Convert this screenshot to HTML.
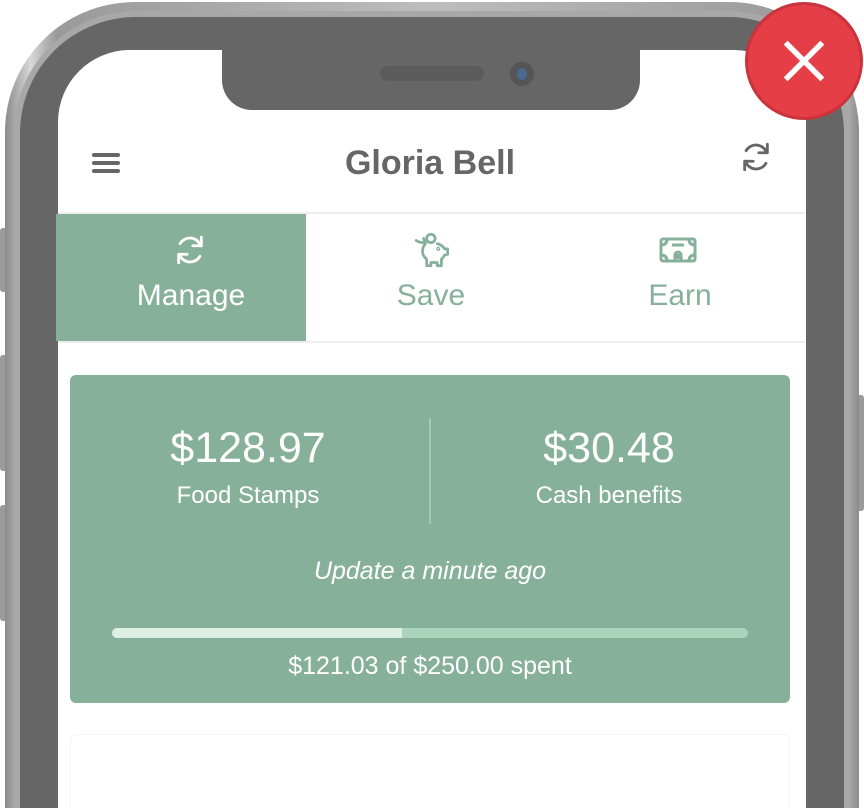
<!DOCTYPE html>
<html><head><meta charset="utf-8"><style>
*{margin:0;padding:0;box-sizing:border-box}
html{width:864px;height:808px;overflow:hidden}
body{width:864px;height:808px;overflow:hidden;background:#fff;position:relative;font-family:"Liberation Sans",sans-serif}
.abs{position:absolute}
.clip{position:absolute;left:0;top:0;width:864px;height:808px;overflow:hidden}
</style></head><body><div class="clip">
<div class="abs" style="left:0;top:228px;width:10px;height:64px;background:#9a9a9a;border-radius:3px"></div>
<div class="abs" style="left:0;top:355px;width:10px;height:116px;background:#9a9a9a;border-radius:3px"></div>
<div class="abs" style="left:0;top:505px;width:10px;height:116px;background:#9a9a9a;border-radius:3px"></div>
<div class="abs" style="left:854px;top:395px;width:10px;height:116px;background:#9a9a9a;border-radius:3px"></div>
<div class="abs" style="left:5px;top:2px;width:854px;height:806px;border-radius:130px 130px 0 0;background:linear-gradient(90deg,#8a8a8a,#d8d8d8 3%,#9a9a9a 6%,#bdbdbd 50%,#9a9a9a 94%,#d8d8d8 97%,#8a8a8a)"></div>
<div class="abs" style="left:14px;top:11px;width:836px;height:797px;border-radius:122px 122px 0 0;background:#a8a8a8"></div>
<div class="abs" style="left:20px;top:17px;width:824px;height:791px;border-radius:116px 116px 0 0;background:#666"></div>
<div class="abs" style="left:58px;top:50px;width:748px;height:758px;border-radius:72px 72px 0 0;background:#fff"></div>
<div class="abs" style="left:222px;top:40px;width:418px;height:70px;background:#666;border-radius:0 0 30px 30px"></div>
<div class="abs" style="left:380px;top:66px;width:104px;height:15px;background:#5c5c5c;border-radius:8px"></div>
<div class="abs" style="left:510px;top:62px;width:24px;height:24px;background:#555;border-radius:50%"></div>
<div class="abs" style="left:517px;top:68px;width:10px;height:12px;background:#4a6a90;border-radius:50%"></div>
<div class="abs" style="left:92px;top:153px;width:28px;height:4px;background:#666;border-radius:2px"></div>
<div class="abs" style="left:92px;top:161px;width:28px;height:4px;background:#666;border-radius:2px"></div>
<div class="abs" style="left:92px;top:169px;width:28px;height:4px;background:#666;border-radius:2px"></div>
<div class="abs" style="left:230px;top:144px;width:400px;text-align:center;font-size:34px;font-weight:bold;color:#666">Gloria Bell</div>
<svg class="abs" style="left:738px;top:140px" width="36" height="34" viewBox="0 0 24 24" fill="none" stroke="#666" stroke-width="2" stroke-linecap="round" stroke-linejoin="round"><path d="M20 3v6h-6"/><path d="M4 21v-6h6"/><path d="M19.5 9A8 8 0 0 0 5 7.5"/><path d="M4.5 15a8 8 0 0 0 14.5 1.5"/></svg>
<div class="abs" style="left:58px;top:212px;width:748px;height:2px;background:#eee"></div>
<div class="abs" style="left:58px;top:341px;width:748px;height:2px;background:#eee"></div>
<div class="abs" style="left:56px;top:214px;width:250px;height:127px;background:#86b09a"></div>
<svg class="abs" style="left:172px;top:233px" width="36" height="34" viewBox="0 0 24 24" fill="none" stroke="#fff" stroke-width="2" stroke-linecap="round" stroke-linejoin="round"><path d="M20 3v6h-6"/><path d="M4 21v-6h6"/><path d="M19.5 9A8 8 0 0 0 5 7.5"/><path d="M4.5 15a8 8 0 0 0 14.5 1.5"/></svg>
<div class="abs" style="left:66px;top:279px;width:250px;text-align:center;font-size:30px;color:#fff">Manage</div>
<svg class="abs" style="left:412px;top:230px" width="42" height="42" viewBox="0 0 40 40" fill="none" stroke="#86b09a" stroke-width="2.6" stroke-linecap="round" stroke-linejoin="round"><circle cx="18" cy="8" r="4"/><path d="M4 10c3 2 5 2 8 2"/><path d="M24 13c4 1 6 3 7 5l3 0 0 5-3 1c-1 2-2 3-3 4v6h-4v-3h-6v3h-4v-6c-2-2-4-4-4-8 0-3 1-5 3-7l-2-5"/><circle cx="25" cy="18" r="0.6"/></svg>
<div class="abs" style="left:306px;top:279px;width:250px;text-align:center;font-size:30px;color:#86b09a">Save</div>
<svg class="abs" style="left:659px;top:236px" width="38" height="28" viewBox="0 0 38 28" fill="none" stroke="#86b09a" stroke-width="3" stroke-linejoin="round"><rect x="2" y="3" width="34" height="22" rx="2"/><path d="M2 9c4 0 6-2 6-6M36 9c-4 0-6-2-6-6M2 19c4 0 6 2 6 6M36 19c-4 0-6 2-6 6"/><path d="M13 9h12"/><path d="M16 25v-6a3 3 0 0 1 6 0v6"/><path d="M19 18v5"/></svg>
<div class="abs" style="left:555px;top:279px;width:250px;text-align:center;font-size:30px;color:#86b09a">Earn</div>
<div class="abs" style="left:70px;top:375px;width:720px;height:328px;background:#86b09a;border-radius:6px"></div>
<div class="abs" style="left:429px;top:418px;width:2px;height:106px;background:#a5c7b3"></div>
<div class="abs" style="left:100px;top:424px;width:296px;text-align:center;font-size:43px;color:#fff">$128.97</div>
<div class="abs" style="left:100px;top:482px;width:296px;text-align:center;font-size:24px;color:#fff">Food Stamps</div>
<div class="abs" style="left:460px;top:424px;width:298px;text-align:center;font-size:43px;color:#fff">$30.48</div>
<div class="abs" style="left:460px;top:482px;width:298px;text-align:center;font-size:24px;color:#fff">Cash benefits</div>
<div class="abs" style="left:70px;top:557px;width:720px;text-align:center;font-size:25px;font-style:italic;color:#fff">Update a minute ago</div>
<div class="abs" style="left:112px;top:628px;width:636px;height:10px;background:#acd4bd;border-radius:5px;overflow:hidden"><div style="width:290px;height:10px;background:#ddeee4"></div></div>
<div class="abs" style="left:70px;top:652px;width:720px;text-align:center;font-size:25px;color:#fff">$121.03 of $250.00 spent</div>
<div class="abs" style="left:70px;top:734px;width:720px;height:74px;border:1px solid #f4f4f4;border-bottom:none;border-radius:6px 6px 0 0"></div>
<div class="abs" style="left:745px;top:2px;width:118px;height:118px;border-radius:50%;background:#e53e47;border:3px solid #c9343c"></div>
<svg class="abs" style="left:782px;top:39px" width="44" height="44" viewBox="0 0 48 48" stroke="#fff" stroke-width="6"><path d="M4 4L44 44M44 4L4 44"/></svg>
</div></body></html>
